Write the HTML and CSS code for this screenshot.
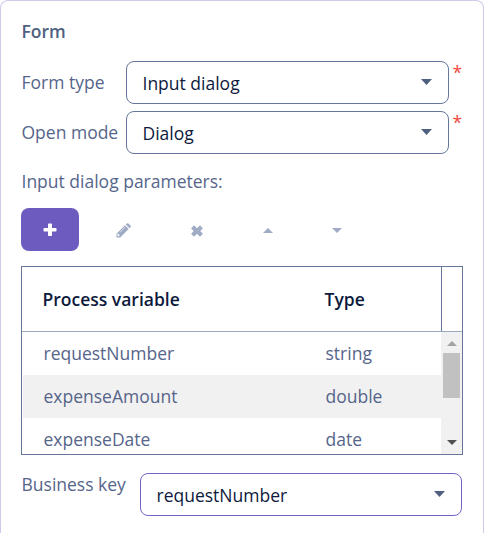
FILE: index.html
```html
<!DOCTYPE html>
<html lang="en">
<head>
<meta charset="utf-8">
<title>Form</title>
<link rel="stylesheet" href="styles.css">
</head>
<body>
<main class="panel">
  <h1 class="title">Form</h1>
  <div class="field">
    <span class="label">Form type</span>
    <div class="select">Input dialog<svg class="caret" viewBox="0 0 11 6"><path d="M0 0h11L5.5 6z"/></svg></div>
    <span class="required">*</span>
  </div>
  <div class="field">
    <span class="label">Open mode</span>
    <div class="select">Dialog<svg class="caret" viewBox="0 0 11 6"><path d="M0 0h11L5.5 6z"/></svg></div>
    <span class="required">*</span>
  </div>
  <p class="caption">Input dialog parameters:</p>
  <div class="toolbar">
    <button class="tool add" aria-label="Add"><svg width="14" height="14" viewBox="0 0 14 14"><path d="M5.8.5h2.4q.8 0 .8.8V5h3.700q.8 0 .8.8v1.900q0 .8-.8.8H9v3.700q0 .8-.8.8H5.800q-.8 0-.8-.8V8.500H1.300q-.8 0-.8-.8V5.800q0-.8.8-.8H5V1.300q0-.8.8-.8z"/></svg></button>
    <button class="tool edit" aria-label="Edit"><svg width="15" height="15" viewBox="0 0 15 15"><path fill-rule="evenodd" d="M.5 14.500V10.800L9 2.300l3.700 3.700-8.500 8.500zM2.900 13.300l.9-.9-1.900-1.900-.9.9v.8h1.100v1.100zM9.200 3.800L4 9l.3.300 5.200-5.200zM9.800 1.500l1-1q.8-.7 1.600 0l2.100 2.100q.7.800 0 1.600l-1 1z"/></svg></button>
    <button class="tool remove" aria-label="Remove"><svg width="12" height="12" viewBox="0 0 12 12"><path d="M.5 3L2.500.8q.5-.5 1 0L6 3.300 8.500.8q.5-.5 1 0L11.500 3q.4.400 0 .9L9.200 6l2.300 2.300q.4.500 0 .9l-2 2q-.5.500-1 0L6 8.800l-2.500 2.400q-.5.500-1 0l-2-2q-.4-.4 0-.9L2.800 6 .5 3.900q-.4-.5 0-.9z"/></svg></button>
    <button class="tool up" aria-label="Move up"><svg width="10" height="5" viewBox="0 0 10 5"><path d="M0 5h10L5 0z"/></svg></button>
    <button class="tool down" aria-label="Move down"><svg width="10" height="5" viewBox="0 0 10 5"><path d="M0 0h10L5 5z"/></svg></button>
  </div>
  <section class="table">
    <div class="head"><span>Process variable</span><span>Type</span><i class="corner"></i></div>
    <div class="body">
      <div class="rows">
        <div class="row"><span>requestNumber</span><span>string</span></div>
        <div class="row alt"><span>expenseAmount</span><span>double</span></div>
        <div class="row"><span>expenseDate</span><span>date</span></div>
      </div>
      <div class="scrollbar">
        <svg class="arrow-up" viewBox="0 0 10 5"><path d="M0 5h10L5 0z"/></svg>
        <div class="thumb"></div>
        <svg class="arrow-down" viewBox="0 0 10 5"><path d="M0 0h10L5 5z"/></svg>
      </div>
    </div>
  </section>
  <div class="field key">
    <span class="label">Business key</span>
    <div class="select">requestNumber<svg class="caret" viewBox="0 0 11 6"><path d="M0 0h11L5.5 6z"/></svg></div>
  </div>
</main>
</body>
</html>
```
FILE: styles.css
```css
* { box-sizing: border-box; }
body {
  margin: 0;
  background: #fff;
  color: #56658a;
  font: 400 17.5px/24px "Open Sans", sans-serif;
}
svg { display: block; fill: currentColor; }
.panel {
  height: 533px;
  overflow: hidden;
  padding: 18px 20px 0;
  border: 1px solid #d0c9eb;
  border-bottom: 0;
  border-radius: 8px 8px 0 0;
}
.title { margin: 0 0 18px; padding-left: .5px; font-size: 17.5px; line-height: 24px; font-weight: 600; color: #4f5f80; }
.field { display: flex; margin-bottom: 7px; }
.label { width: 105px; padding: 9px 0 0 .5px; white-space: nowrap; }
.select {
  display: flex;
  align-items: center;
  justify-content: space-between;
  width: 323px;
  height: 43px;
  padding: 0 16px 0 15.500px;
  border: 1px solid #66759b;
  border-radius: 8px;
  color: #0d1a3c;
}
.caret { width: 11px; height: 6px; margin-top: -1px; color: #4f5f80; }
.required { margin: -1px 0 0 3.500px; color: #f0483e; }
.caption { margin: 15px 0 15px; padding-left: .5px; }
.toolbar { display: flex; height: 43px; margin-bottom: 15px; color: #a0abc6; }
.tool {
  display: flex;
  align-items: center;
  justify-content: center;
  padding: 0;
  border: 0;
  background: none;
  color: inherit;
}
.add { width: 58px; border-radius: 8px; background: #6e5bc0; color: #fff; }
.edit { width: 73px; margin-left: 8px; padding-top: 1px; }
.remove { width: 74px; padding-top: 2px; }
.up { width: 68px; padding-top: 2px; }
.down { width: 70px; padding-top: 1px; }
.table { width: 442px; height: 189px; border: 1px solid #66759b; }
.head {
  display: grid;
  grid-template-columns: 282px 1fr 21px;
  align-items: center;
  height: 65px;
  padding-left: 20.500px;
  border-bottom: 1px solid #9ba9c0;
  color: #0d1a3c;
  font-weight: 600;
}
.corner { align-self: stretch; border-left: 1px solid #66759b; }
.body { display: flex; height: 122px; overflow: hidden; }
.rows { flex: 1; padding-left: 1px; }
.row {
  display: grid;
  grid-template-columns: 282px 1fr;
  align-items: center;
  height: 43px;
  padding: 0 0 2px 20.500px;
}
.alt { background: #f1f1f1; }
.scrollbar {
  display: flex;
  flex-direction: column;
  align-items: center;
  width: 21px;
  padding: 9px 0;
  background: #f1f1f1;
}
.arrow-up { width: 10px; height: 5px; color: #a3a3a3; }
.arrow-down { width: 10px; height: 5px; margin-top: auto; color: #505050; }
.thumb { width: 17px; height: 45px; margin-top: 7px; background: #c1c1c1; }
.key { margin-top: 18px; }
.key .label { width: 119px; padding-top: 0; margin-top: -1px; }
.key .select { width: 322px; border-color: #7562c3; }
```
